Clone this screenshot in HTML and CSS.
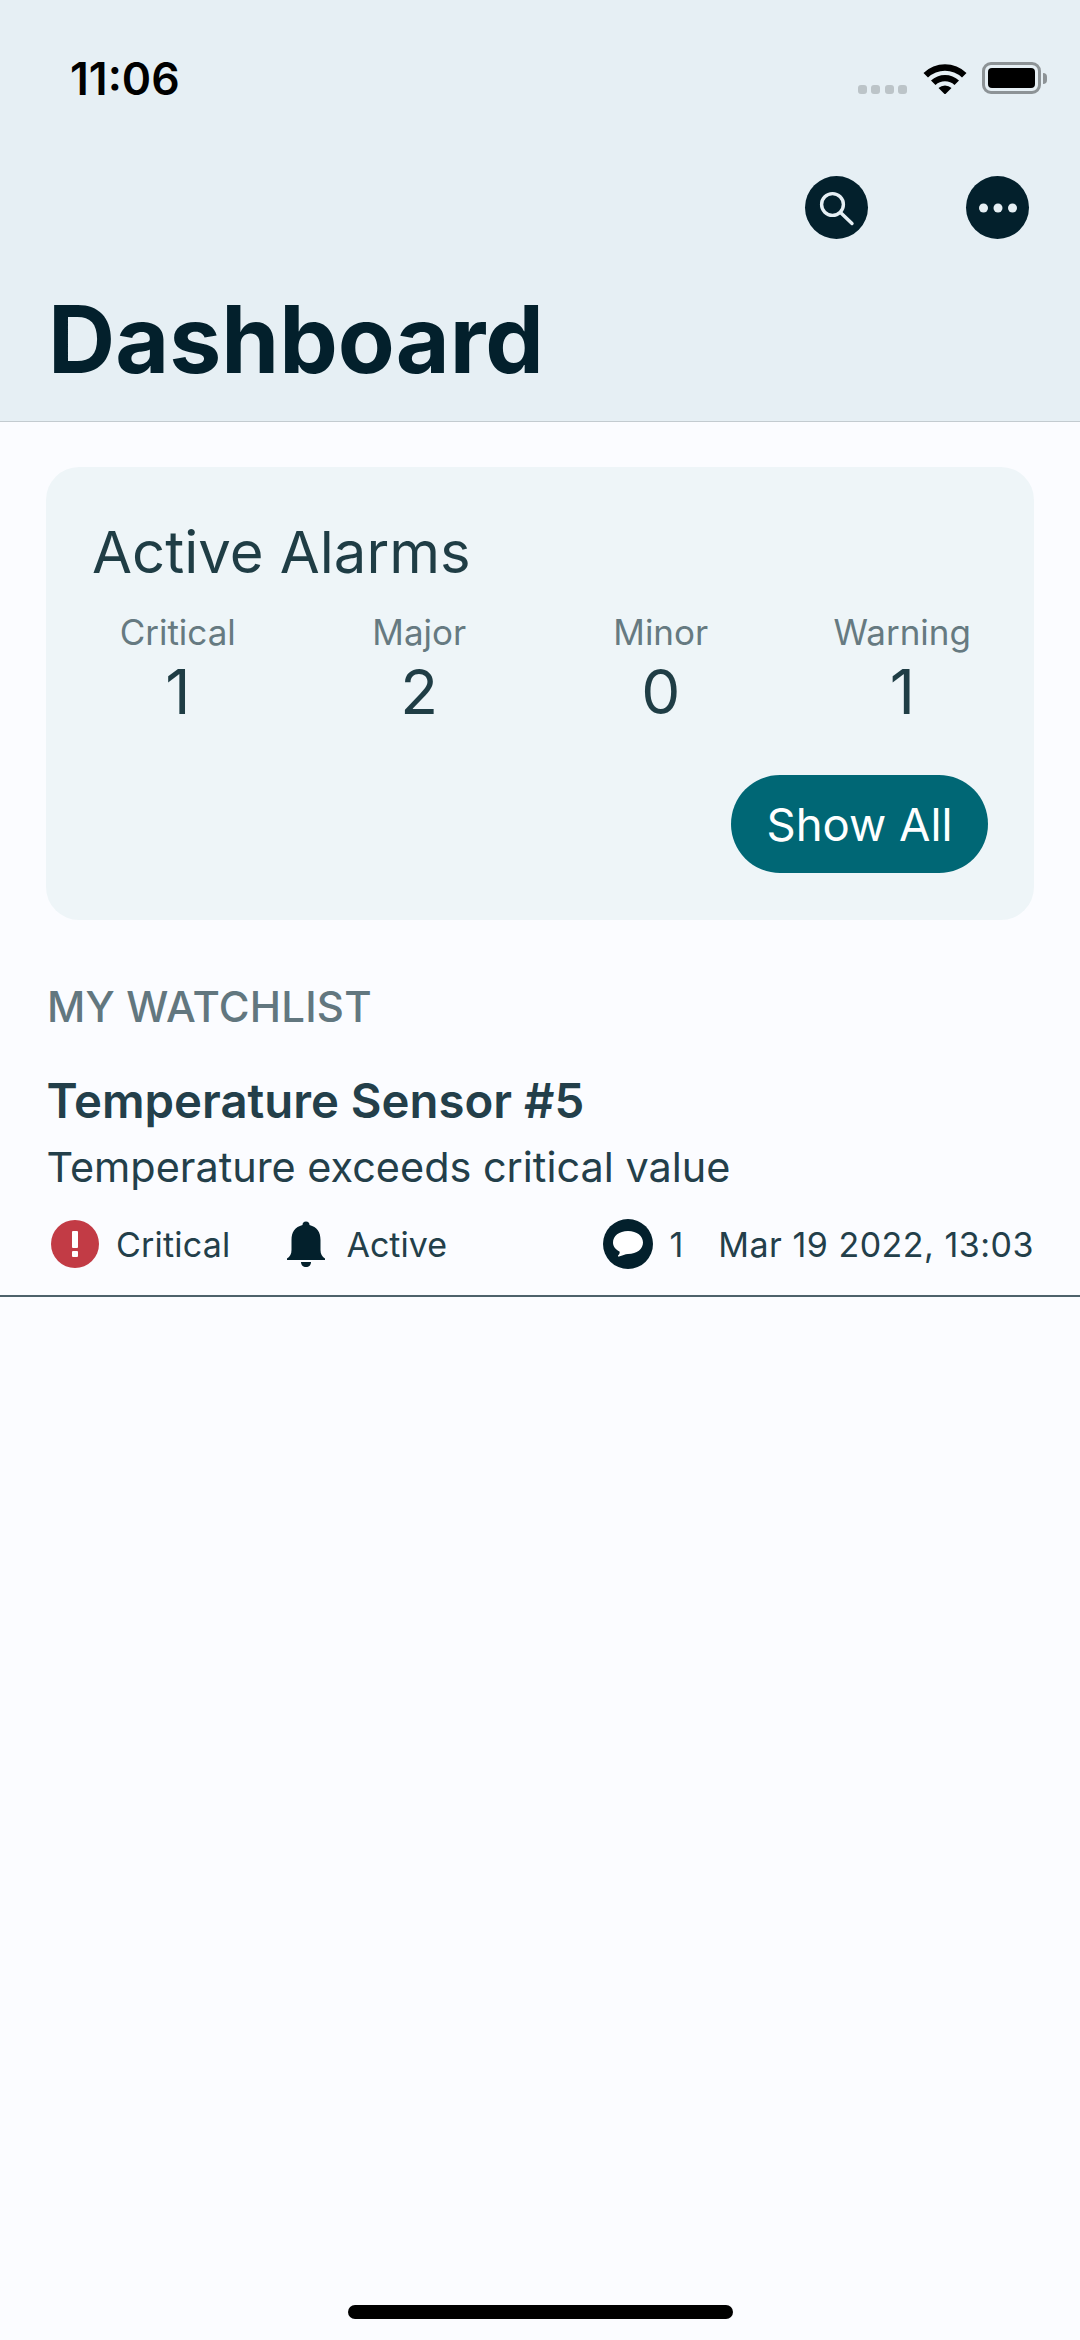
FILE: index.html
```html
<!DOCTYPE html>
<html lang="en">
<head>
  <meta charset="UTF-8">
  <meta name="viewport" content="width=device-width, initial-scale=1.0">
  <title>Dashboard</title>
  <link rel="stylesheet" href="styles.css">
</head>
<body>
  <div class="screen">
    <header class="top">
      <div class="status-bar">
        <span class="time">11:06</span>
        <div class="status-icons">
          <div class="signal"><i></i><i></i><i></i><i></i></div>
          <svg class="wifi" width="44" height="32" viewBox="0 0 44 32">
            <path d="M0.5 11 A31 31 0 0 1 43.5 11 L39 15.5 A25 25 0 0 0 5 15.5 Z" fill="#000"/>
            <path d="M8 18.5 A20.5 20.5 0 0 1 36 18.5 L31.5 23 A14 14 0 0 0 12.5 23 Z" fill="#000"/>
            <path d="M15.5 26 A9.5 9.5 0 0 1 28.5 26 L22 32.5 Z" fill="#000"/>
          </svg>
          <div class="battery"><div class="battery-body"><div class="battery-fill"></div></div><div class="battery-cap"></div></div>
        </div>
      </div>
      <div class="actions">
        <button class="round-btn">
          <svg width="63" height="63" viewBox="0 0 63 63" fill="none" stroke="#e6eff4" stroke-width="3.4" stroke-linecap="round">
            <circle cx="27.5" cy="28.5" r="10.9"/>
            <path d="M35.5 36.5 L47 47.5"/>
          </svg>
        </button>
        <button class="round-btn">
          <svg width="40" height="12" viewBox="0 0 40 12" fill="#e6eff4">
            <circle cx="5.5" cy="6" r="4.5"/><circle cx="20" cy="6" r="4.5"/><circle cx="34.5" cy="6" r="4.5"/>
          </svg>
        </button>
      </div>
      <h1>Dashboard</h1>
    </header>

    <main class="content">
      <section class="alarm-card">
        <h2>Active Alarms</h2>
        <div class="alarm-grid">
          <div class="alarm-col"><span class="alarm-label">Critical</span><span class="alarm-num">1</span></div>
          <div class="alarm-col"><span class="alarm-label">Major</span><span class="alarm-num">2</span></div>
          <div class="alarm-col"><span class="alarm-label">Minor</span><span class="alarm-num">0</span></div>
          <div class="alarm-col"><span class="alarm-label">Warning</span><span class="alarm-num">1</span></div>
        </div>
        <div class="card-foot"><button class="show-all">Show All</button></div>
      </section>

      <h3 class="section-title">MY WATCHLIST</h3>

      <article class="watch-item">
        <div class="watch-name">Temperature Sensor #5</div>
        <div class="watch-desc">Temperature exceeds critical value</div>
        <div class="watch-meta">
          <span class="meta-group sev">
            <svg width="48" height="48" viewBox="0 0 48 48">
              <circle cx="24" cy="24" r="24" fill="#c23b45"/>
              <rect x="21" y="11" width="6" height="17" rx="1" fill="#fff"/>
              <rect x="21" y="31" width="6" height="6" rx="1" fill="#fff"/>
            </svg>
            Critical
          </span>
          <span class="meta-group state">
            <svg width="40" height="48" viewBox="0 0 40 48" fill="#03202c">
              <path d="M16.5 5 A3.5 3.5 0 0 1 23.5 5 C31 7 34.5 12 34.5 20 L34.5 30 C34.5 34 36 36.5 39 38.5 L39 40 L1 40 L1 38.5 C4 36.5 5.5 34 5.5 30 L5.5 20 C5.5 12 9 7 16.5 5 Z"/>
              <path d="M15 42 L25 42 C25 45 23 47 20 47 C17 47 15 45 15 42 Z"/>
            </svg>
            Active
          </span>
          <span class="meta-group comments">
            <svg width="50" height="50" viewBox="0 0 50 50">
              <circle cx="25" cy="25" r="25" fill="#03202c"/>
              <path d="M25 12 C34 12 40 17 40 23.5 C40 30 34 35 25 35 C22 35 19.5 36.5 16 37.5 C15 37.8 14.5 37 15.5 36 C16.5 35 17 33.5 16.5 32.5 C12.5 30.5 10 27.5 10 23.5 C10 17 16 12 25 12 Z" fill="#fff"/>
            </svg>
            1
          </span>
          <span class="meta-date">Mar 19 2022, 13:03</span>
        </div>
      </article>
    </main>

    <div class="home-bar"></div>
  </div>
</body>
</html>
```

FILE: styles.css
```css
* {
  box-sizing: border-box;
  margin: 0;
  padding: 0;
}

html, body {
  height: 100%;
  overflow: hidden;
}

body {
  font-family: Inter, "Noto Sans", sans-serif;
  background: #fbfcff;
  color: #233f4a;
}

.screen {
  position: relative;
  height: 2340px;
  display: flex;
  flex-direction: column;
}

/* header */
.top {
  height: 422px;
  background: #e6eff4;
  border-bottom: 1px solid #c3cbd0;
  padding: 0 51px 0 48px;
  display: flex;
  flex-direction: column;
}

.status-bar {
  height: 104px;
  padding: 54px 0 0 22px;
  display: flex;
  justify-content: space-between;
  align-items: flex-start;
}

.time {
  font-size: 44.5px;
  line-height: 50px;
  font-weight: 600;
  color: #000;
}

.status-icons {
  display: flex;
  align-items: flex-start;
  margin-right: -18px;
  padding-top: 8px;
}

.signal {
  display: flex;
  gap: 4.5px;
  margin-top: 23px;
  margin-right: 16px;
}

.signal i {
  width: 9px;
  height: 9px;
  border-radius: 3px;
  background: #bcc4c8;
}

.wifi {
  margin-right: 15px;
}

.battery {
  display: flex;
  align-items: center;
}

.battery-body {
  width: 59px;
  height: 32px;
  border: 3px solid #8d9396;
  border-radius: 9px;
  padding: 3px;
}

.battery-fill {
  height: 100%;
  background: #000;
  border-radius: 4px;
}

.battery-cap {
  width: 4px;
  height: 11px;
  margin-left: 2px;
  background: #8d9396;
  border-radius: 0 4px 4px 0;
}

.actions {
  display: flex;
  justify-content: flex-end;
  gap: 98px;
  margin-top: 72px;
}

.round-btn {
  width: 63px;
  height: 63px;
  border: none;
  border-radius: 50%;
  background: #03202c;
  display: flex;
  align-items: center;
  justify-content: center;
}

h1 {
  font-size: 93px;
  line-height: 110px;
  font-weight: 700;
  color: #03202c;
  margin-top: 45px;
}

/* content */
.content {
  padding: 45px 46px 0;
}

.alarm-card {
  height: 453px;
  background: #eef5f8;
  border-radius: 33px;
  padding: 52px 46px 0 46px;
}

h2 {
  font-size: 58px;
  line-height: 66px;
  font-weight: 400;
  color: #1f3d45;
}

.alarm-grid {
  display: grid;
  grid-template-columns: repeat(4, 1fr);
  margin: 27px -35px 0 -35px;
}

.alarm-col {
  display: flex;
  flex-direction: column;
  align-items: center;
}

.alarm-label {
  font-size: 35px;
  line-height: 40px;
  font-weight: 400;
  color: #667a81;
}

.alarm-num {
  font-size: 62px;
  line-height: 72px;
  font-weight: 400;
  color: #1f3d45;
  margin-top: 4px;
}

.card-foot {
  display: flex;
  justify-content: flex-end;
  margin-top: 47px;
}

.show-all {
  width: 257px;
  height: 98px;
  border: none;
  border-radius: 49px;
  background: #006775;
  color: #fff;
  font-family: inherit;
  font-size: 45.5px;
  font-weight: 400;
}

.section-title {
  font-size: 42px;
  line-height: 48px;
  font-weight: 500;
  letter-spacing: 0.2px;
  color: #62777f;
  margin-top: 63px;
  padding-left: 1px;
}

.watch-item {
  margin: 0 -46px;
  padding: 40px 46px 0 46.5px;
  border-bottom: 2px solid #4d626b;
  height: 266px;
}

.watch-name {
  font-size: 47.3px;
  line-height: 60px;
  font-weight: 600;
  color: #233f4a;
}

.watch-desc {
  font-size: 41.4px;
  line-height: 50px;
  margin-top: 11px;
  color: #233f4a;
}

.watch-meta {
  display: flex;
  align-items: center;
  height: 50px;
  font-size: 34px;
  margin-top: 27px;
  padding-left: 4.5px;
}

.meta-group {
  display: flex;
  align-items: center;
  gap: 17px;
}

.sev {
  margin-right: 56px;
  letter-spacing: 0.2px;
}

.state { gap: 20px; }

.comments {
  margin-left: auto;
  gap: 16px;
  margin-right: 35px;
}

.meta-date {
  letter-spacing: 0.5px;
}

.home-bar {
  position: absolute;
  left: 348px;
  bottom: 21px;
  width: 385px;
  height: 14px;
  background: #000;
  border-radius: 7px;
}
```
